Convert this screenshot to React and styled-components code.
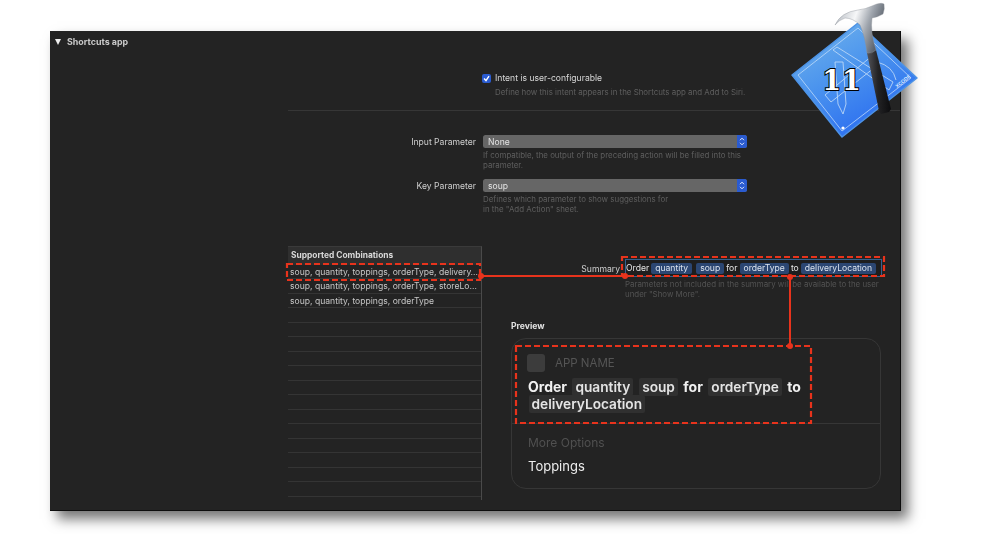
import React from "react";
import styled, { createGlobalStyle } from "styled-components";

const Global = createGlobalStyle`
  html, body { margin: 0; padding: 0; background: #fff; width: 1000px; height: 534px; overflow: hidden; }
  body { font-family: Inter, "Liberation Sans", sans-serif; }
`;
const Stage = styled.div`
  position: relative;
  width: 1000px;
  height: 534px;
  padding: 31px 0 0 50px;
  box-sizing: border-box;
`;
const Panel = styled.section`
  position: relative;
  width: 851px;
  height: 480px;
  box-sizing: border-box;
  background: #232323;
  border-bottom: 1px solid #0c0c0c;
  border-right: 1px solid #0c0c0c;
  box-shadow: 7px 8px 12px rgba(0, 0, 0, 0.55);
  color: #d6d6d6;
  font-size: 8.6px;
  filter: blur(0.25px);
`;
const Header = styled.header`
  display: flex;
  align-items: center;
  gap: 6px;
  height: 11px;
  padding: 5px 0 0 5px;
  font-size: 8.9px;
  font-weight: 700;
  color: #c9c9c9;
`;
const Triangle = styled.span`
  width: 0;
  height: 0;
  border-left: 3.5px solid transparent;
  border-right: 3.5px solid transparent;
  border-top: 6px solid #eee;
`;
const Body = styled.div`
  padding: 25px 0 0 238px;
`;
const ConfigSection = styled.div`
  height: 38px;
  padding-left: 194px;
  border-bottom: 1px solid #363636;
`;
const CheckLine = styled.div`
  display: flex;
  align-items: center;
  gap: 4px;
  height: 12px;
  color: #d8d8d8;
`;
const Checkbox = styled.span`
  display: flex;
  align-items: center;
  justify-content: center;
  width: 9px;
  height: 9px;
  border-radius: 2px;
  background: #2a5bd0;
`;
const Help = styled.div`
  color: #5f5f5f;
  font-size: 7.9px;
  line-height: 10px;
  margin-left: ${(p) => p.$indent || 0}px;
  margin-top: ${(p) => p.$top || 0}px;
`;
const ParamSection = styled.div`
  padding-top: 24px;
  display: grid;
  grid-template-columns: 188px 264px;
  column-gap: 7px;
  align-items: center;
`;
const Label = styled.div`
  text-align: right;
  color: #cfcfcf;
`;
const Select = styled.div`
  display: flex;
  align-items: center;
  justify-content: space-between;
  height: 13px;
  padding-left: 5px;
  border-radius: 2.5px;
  background: #666;
  color: #e3e3e3;
  overflow: hidden;
`;
const Stepper = styled.span`
  display: flex;
  align-items: center;
  justify-content: center;
  width: 10.5px;
  height: 13px;
  background: #2a5bd0;
`;
const HelpCell = styled.div`
  grid-column: 2;
  padding-top: 2px;
  min-height: ${(p) => p.$h}px;
`;
const Lower = styled.div`
  display: flex;
  margin-top: 28px;
`;
const Table = styled.div`
  width: 194px;
  height: 254px;
  box-sizing: border-box;
  border-right: 1px solid #4a4a4a;
  border-top: 1px solid #3a3a3a;
  overflow: hidden;
  flex: none;
`;
const TableHead = styled.div`
  height: 17.5px;
  padding: 2px 0 0 3px;
  box-sizing: border-box;
  line-height: 13px;
  font-size: 8.4px;
  font-weight: 700;
  background: #2f2f2f;
  color: #d8d8d8;
`;
const Row = styled.div`
  height: 14.5px;
  box-sizing: border-box;
  line-height: 14px;
  padding: 0 3px 0 2px;
  border-bottom: 1px solid #343434;
  color: #c8c8c8;
  white-space: nowrap;
`;
const Right = styled.div`
  flex: 1;
`;
const SummaryRow = styled.div`
  display: flex;
  align-items: center;
  height: 18px;
  margin-top: 13px;
`;
const SummaryLabel = styled.div`
  width: 138px;
  text-align: right;
  margin-right: 5px;
  padding-top: 2px;
  color: #cfcfcf;
`;
const SummaryField = styled.div`
  display: flex;
  align-items: center;
  width: 257px;
  height: 18px;
  box-sizing: border-box;
  border: 1.5px solid #35618f;
  background: #1e1e1e;
  color: #e6e6e6;
  white-space: pre;
  overflow: hidden;
`;
const Token = styled.span`
  background: #2b4672;
  border-radius: 2px;
  padding: 0 4px;
  height: 11px;
  line-height: 11px;
  margin: 0 2px;
  color: #dbe3ee;
`;
const SummaryHelp = styled.div`
  margin-left: 143px;
  margin-top: 2px;
  color: #535353;
  font-size: 7.9px;
  line-height: 10px;
`;
const PreviewTitle = styled.div`
  margin: 21px 0 0 29px;
  height: 12px;
  line-height: 12px;
  font-weight: 700;
  color: #e2e2e2;
`;
const Card = styled.div`
  margin: 6px 0 0 29px;
  width: 370px;
  height: 151px;
  box-sizing: border-box;
  border: 1px solid #363636;
  border-radius: 15px;
`;
const CardTop = styled.div`
  height: 85px;
  box-sizing: border-box;
  padding: 15px 0 0 15px;
  border-bottom: 1px solid #363636;
`;
const AppLine = styled.div`
  display: flex;
  align-items: center;
  gap: 10px;
  font-size: 11.5px;
  color: #555;
`;
const AppIcon = styled.span`
  width: 18px;
  height: 18px;
  border-radius: 3px;
  background: #3c3c3c;
`;
const Sentence = styled.div`
  margin-top: 7px;
  margin-left: 1px;
  width: 285px;
  font-size: 14px;
  line-height: 16.5px;
  word-spacing: 1.6px;
  font-weight: 700;
  color: #f0f0f0;
`;
const Chip = styled.span`
  background: #303030;
  border-radius: 2px;
  padding: 1px 3px;
  margin: 0 0.5px;
  font-size: 13.7px;
  font-weight: 600;
  color: #e4e4e4;
`;
const CardBottom = styled.div`
  padding: 11px 0 0 16px;
`;
const MoreLabel = styled.div`
  font-size: 12px;
  color: #505050;
`;
const Topping = styled.div`
  margin-top: 8px;
  font-size: 13px;
  line-height: 16px;
  color: #eeeeee;
`;
const Overlay = styled.svg`
  position: absolute;
  left: 0;
  top: 0;
  pointer-events: none;
`;
const Badge = styled.svg`
  position: absolute;
  left: 785px;
  top: 0;
`;

const rows = [
  "soup, quantity, toppings, orderType, delivery…",
  "soup, quantity, toppings, orderType, storeLo…",
  "soup, quantity, toppings, orderType",
  ...Array(15).fill("\u00a0"),
];

function Chevrons() {
  return (
    <svg width="6" height="9" viewBox="0 0 6 9" fill="none" stroke="#e8eefc" strokeWidth="1">
      <path d="M1 3.2 3 1.2l2 2M1 5.8l2 2 2-2" />
    </svg>
  );
}

function Annotations() {
  const red = "#e8331c";
  return (
    <Overlay width="1000" height="534" viewBox="0 0 1000 534" fill="none">
      <g stroke={red} strokeWidth="2.2" strokeDasharray="6 3">
        <rect x="287" y="264" width="193" height="16" />
        <rect x="622" y="257" width="262" height="19" />
        <rect x="516" y="346" width="295" height="77" />
      </g>
      <g stroke={red} strokeWidth="2">
        <path d="M481 276H625" />
        <path d="M790 277V346" />
      </g>
      <g fill={red}>
        <circle cx="481" cy="276" r="3" />
        <circle cx="625" cy="276" r="3" />
        <circle cx="790" cy="277" r="3" />
        <circle cx="790" cy="346" r="3" />
      </g>
    </Overlay>
  );
}

function XcodeBadge() {
  return (
    <Badge width="140" height="145" viewBox="785 0 140 145">
      <defs>
        <linearGradient id="blue" x1="0" y1="0" x2="0.6" y2="1">
          <stop offset="0" stopColor="#76b7ea" />
          <stop offset="0.5" stopColor="#4b94ee" />
          <stop offset="1" stopColor="#2a6cf0" />
        </linearGradient>
        <linearGradient id="steel" x1="0" y1="0" x2="1" y2="0.35">
          <stop offset="0" stopColor="#aab0b8" />
          <stop offset="0.45" stopColor="#f6f7f8" />
          <stop offset="0.72" stopColor="#a0a6ae" />
          <stop offset="1" stopColor="#5a616b" />
        </linearGradient>
        <linearGradient id="grip" x1="0" y1="0" x2="1" y2="0">
          <stop offset="0" stopColor="#55555a" />
          <stop offset="0.45" stopColor="#232325" />
          <stop offset="1" stopColor="#0c0c0e" />
        </linearGradient>
      </defs>
      <path d="M792 75 858 23 917 78 842 137Z" fill="url(#blue)" stroke="#4d93e6" strokeWidth="1.5" strokeLinejoin="round" />
      <path d="M798 75 858 28 911 78 842 131Z" fill="none" stroke="#cfe4fa" strokeWidth="0.7" />
      <g fill="none" stroke="#b9d6f6" strokeWidth="0.9">
        <path d="M833 50 837 47 893 82 889 90Z" />
        <path d="M825 95 873 55 879 64 831 102Z" />
        <path d="M835 62 843 62 846 104 843 114 838 104Z" />
        <path d="M877 62Q893 66 896 80" />
      </g>
      <circle cx="843" cy="128" r="1.6" fill="#fff" />
      <text x="897" y="88" fontSize="5" fontFamily="Liberation Sans" fontWeight="700" fill="#dcecff" transform="rotate(-38 897 88)">XCODE</text>
      <text x="842" y="90" textAnchor="middle" fontSize="27" letterSpacing="1" fontFamily="DejaVu Serif" fontWeight="700" fill="#fff" stroke="#000" strokeWidth="2" paintOrder="stroke">11</text>
      <path d="M867 53 876 50 891 109 889 112 881 114 879 111Z" fill="url(#grip)" />
      <path d="M835 25Q841 12 858 10 866 9 872 6 880 2 884 4 885 9 883 14 878 17 872 18 870 32 876 50 872 54 867 53 865 36 860 25 853 18 845 18 839 20 835 25Z" fill="url(#steel)" stroke="#8b9098" strokeWidth="0.4" />
    </Badge>
  );
}

export default function App() {
  return (
    <Stage>
      <Global />
      <Panel>
        <Header>
          <Triangle />
          Shortcuts app
        </Header>
        <Body>
          <ConfigSection>
            <CheckLine>
              <Checkbox>
                <svg width="7" height="7" viewBox="0 0 7 7" fill="none" stroke="#fff" strokeWidth="1.4">
                  <path d="M1 3.6 3 5.6 6 1.2" />
                </svg>
              </Checkbox>
              Intent is user-configurable
            </CheckLine>
            <Help $indent={13} $top={3}>Define how this intent appears in the Shortcuts app and Add to Siri.</Help>
          </ConfigSection>
          <ParamSection>
            <Label>Input Parameter</Label>
            <Select>None<Stepper><Chevrons /></Stepper></Select>
            <HelpCell $h={29}>
              <Help>If compatible, the output of the preceding action will be filled into this parameter.</Help>
            </HelpCell>
            <Label>Key Parameter</Label>
            <Select>soup<Stepper><Chevrons /></Stepper></Select>
            <HelpCell $h={24}>
              <Help>Defines which parameter to show suggestions for<br />in the "Add Action" sheet.</Help>
            </HelpCell>
          </ParamSection>
          <Lower>
            <Table>
              <TableHead>Supported Combinations</TableHead>
              {rows.map((r, i) => <Row key={i}>{r}</Row>)}
            </Table>
            <Right>
              <SummaryRow>
                <SummaryLabel>Summary</SummaryLabel>
                <SummaryField>
                  Order<Token>quantity</Token><Token>soup</Token>for<Token>orderType</Token>to<Token>deliveryLocation</Token>
                </SummaryField>
              </SummaryRow>
              <SummaryHelp>Parameters not included in the summary will be available to the user<br />under "Show More".</SummaryHelp>
              <PreviewTitle>Preview</PreviewTitle>
              <Card>
                <CardTop>
                  <AppLine><AppIcon />APP NAME</AppLine>
                  <Sentence>
                    Order <Chip>quantity</Chip> <Chip>soup</Chip> for <Chip>orderType</Chip> to <Chip>deliveryLocation</Chip>
                  </Sentence>
                </CardTop>
                <CardBottom>
                  <MoreLabel>More Options</MoreLabel>
                  <Topping>Toppings</Topping>
                </CardBottom>
              </Card>
            </Right>
          </Lower>
        </Body>
      </Panel>
      <Annotations />
      <XcodeBadge />
    </Stage>
  );
}
